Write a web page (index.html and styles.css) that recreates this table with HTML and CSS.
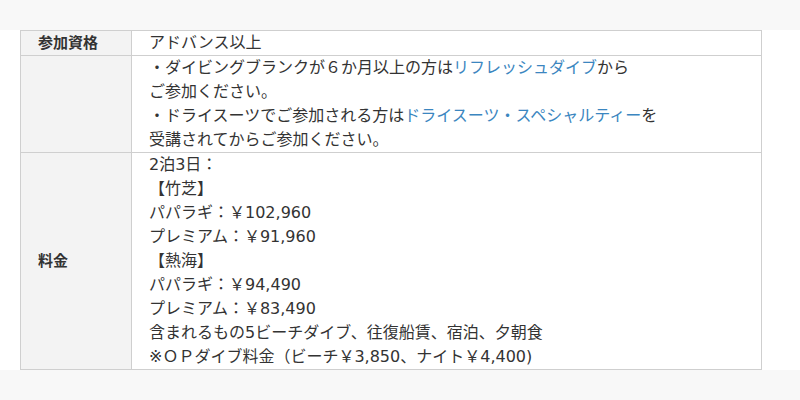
FILE: index.html
```html
<!DOCTYPE html>
<html lang="ja">
<head>
<meta charset="utf-8">
<link rel="stylesheet" href="styles.css">
</head>
<body>
<div class="top-band"></div>
<section class="panel">
  <table class="spec">
    <tr>
      <th>参加資格</th>
      <td>アドバンス以上</td>
    </tr>
    <tr>
      <th></th>
      <td>・ダイビングブランクが６か月以上の方は<a href="#">リフレッシュダイブ</a>から<br>ご参加ください。<br>・ドライスーツでご参加される方は<a href="#">ドライスーツ・スペシャルティー</a>を<br>受講されてからご参加ください。</td>
    </tr>
    <tr>
      <th>料金</th>
      <td>2泊3日：<br>【竹芝】<br>パパラギ：￥102,960<br>プレミアム：￥91,960<br>【熱海】<br>パパラギ：￥94,490<br>プレミアム：￥83,490<br>含まれるもの5ビーチダイブ、往復船賃、宿泊、夕朝食<br>※ＯＰダイブ料金（ビーチ￥3,850、ナイト￥4,400)</td>
    </tr>
  </table>
</section>
<div class="bottom-band"></div>
</body>
</html>
```

FILE: styles.css
```css
html, body {
  margin: 0;
  padding: 0;
  background: #f8f8f8;
}
body {
  font-family: "DejaVu Sans", "Noto Sans CJK JP", sans-serif;
  color: #333;
  font-size: 16px;
}
.top-band {
  height: 30px;
  background: #f8f8f8;
}
.panel {
  background: #fff;
  padding: 0 38px 0 20px;
}
.spec {
  width: 742px;
  border-collapse: collapse;
}
.spec th, .spec td {
  border: 1px solid #cfcfcf;
  padding: 0 17px;
  line-height: 24px;
  vertical-align: middle;
  text-align: left;
}
.spec th {
  width: 76px;
  background: #f3f3f3;
  font-size: 15px;
  font-weight: bold;
}
.spec td {
  background: #fff;
}
.spec a {
  color: #3b86c0;
  text-decoration: none;
}
.bottom-band {
  height: 40px;
  background: #f8f8f8;
}
```
